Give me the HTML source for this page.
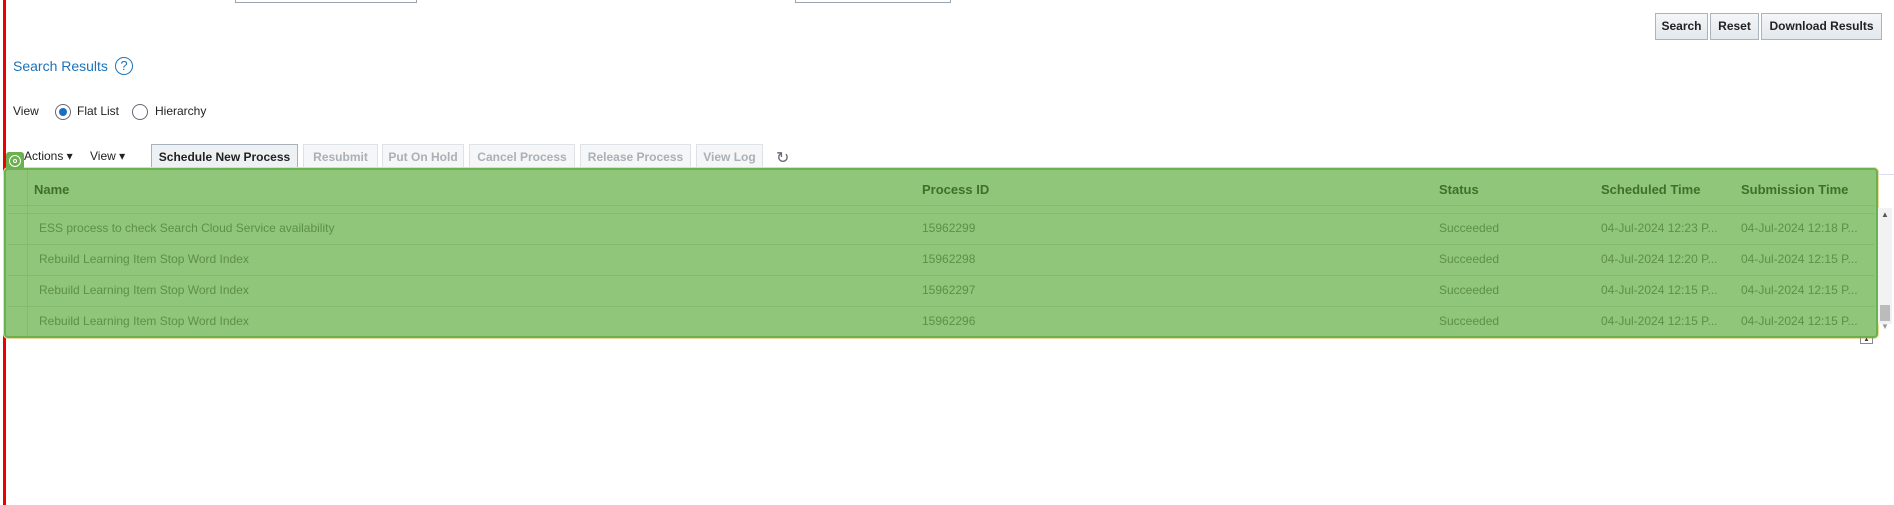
<!DOCTYPE html>
<html><head><meta charset="utf-8"><style>
*{margin:0;padding:0;box-sizing:border-box}
body{width:1894px;height:505px;background:#fff;position:relative;overflow:hidden;font-family:"Liberation Sans",Arial,sans-serif;font-size:12px;color:#333}
.a{position:absolute;white-space:nowrap}
.btn{position:absolute;border:1px solid #aab4bf;background:linear-gradient(#f4f6f8,#e3e8ec);font-weight:bold;font-size:12px;color:#222;text-align:center}
.tb{position:absolute;top:144px;height:26px;line-height:24px;border:1px solid #dde2e6;background:#f5f6f7;color:#a9b0b6;font-weight:bold;font-size:12px;text-align:center}
.hd{position:absolute;top:182px;font-weight:bold;font-size:13px;color:#3f6f2b}
.c{position:absolute;font-size:12px;color:#5e8f48}
.ln{position:absolute;left:8px;width:1866px;height:1px;background:#82bb6c}
</style></head><body>
<div class="a" style="left:3px;top:0;width:3px;height:505px;background:#e00"></div>
<div class="a" style="left:235px;top:0;width:182px;height:3px;border:1px solid #98a4b0;border-top:none"></div>
<div class="a" style="left:795px;top:0;width:156px;height:3px;border:1px solid #98a4b0;border-top:none"></div>
<div class="btn" style="left:1655px;top:13px;width:53px;height:27px;line-height:25px">Search</div>
<div class="btn" style="left:1710px;top:13px;width:49px;height:27px;line-height:25px">Reset</div>
<div class="btn" style="left:1761px;top:13px;width:121px;height:27px;line-height:25px">Download Results</div>
<div class="a" style="left:13px;top:58px;font-size:14px;color:#1d73b8">Search Results</div>
<div class="a" style="left:115px;top:57px;width:18px;height:18px;border:1.5px solid #1d73b8;border-radius:50%;color:#1d73b8;font-size:13px;line-height:15px;text-align:center">?</div>
<div class="a" style="left:13px;top:104px;font-size:12px;color:#222">View</div>
<div class="a" style="left:55px;top:104px;width:16px;height:16px;border:1px solid #667;border-radius:50%"></div>
<div class="a" style="left:59px;top:108px;width:8px;height:8px;background:#1a6fc0;border-radius:50%"></div>
<div class="a" style="left:77px;top:104px;color:#222">Flat List</div>
<div class="a" style="left:132px;top:104px;width:16px;height:16px;border:1px solid #667;border-radius:50%"></div>
<div class="a" style="left:155px;top:104px;color:#222">Hierarchy</div>
<div class="a" style="left:24px;top:149px;color:#222">Actions ▾</div>
<div class="a" style="left:90px;top:149px;color:#222">View ▾</div>
<div class="tb" style="left:151px;width:147px;color:#222;background:#eef1f4;border-color:#a8b2bc">Schedule New Process</div>
<div class="tb" style="left:303px;width:75px">Resubmit</div>
<div class="tb" style="left:382px;width:82px">Put On Hold</div>
<div class="tb" style="left:469px;width:106px">Cancel Process</div>
<div class="tb" style="left:580px;width:111px">Release Process</div>
<div class="tb" style="left:696px;width:67px">View Log</div>
<div class="a" style="left:776px;top:148px;font-size:16px;color:#667">↻</div>
<div class="a" style="left:4px;top:168px;width:1874px;height:170px;background:#8fc67a;border:2px solid #6bb14f;border-radius:4px;box-shadow:0 0 0 1px #f0d9a0"></div>
<div class="a" style="left:6px;top:152px;width:18px;height:18px;background:#6bb14f;border-radius:3px"></div>
<div class="a" style="left:9px;top:155px;width:12px;height:12px;border:1.5px solid #fff;border-radius:50%"></div>
<div class="a" style="left:13px;top:159px;width:4px;height:4px;border:1px solid #fff;border-radius:50%"></div>
<div class="a" style="left:27px;top:170px;width:1px;height:166px;background:#82bb6c"></div>
<div class="ln" style="top:205px"></div><div class="ln" style="top:213px"></div>
<div class="ln" style="top:244px"></div><div class="ln" style="top:275px"></div><div class="ln" style="top:306px"></div>
<div class="hd" style="left:34px">Name</div>
<div class="hd" style="left:922px">Process ID</div>
<div class="hd" style="left:1439px">Status</div>
<div class="hd" style="left:1601px">Scheduled Time</div>
<div class="hd" style="left:1741px">Submission Time</div>
<div class="c" style="left:39px;top:221px">ESS process to check Search Cloud Service availability</div>
<div class="c" style="left:39px;top:252px">Rebuild Learning Item Stop Word Index</div>
<div class="c" style="left:39px;top:283px">Rebuild Learning Item Stop Word Index</div>
<div class="c" style="left:39px;top:314px">Rebuild Learning Item Stop Word Index</div>
<div class="c" style="left:922px;top:221px">15962299</div>
<div class="c" style="left:922px;top:252px">15962298</div>
<div class="c" style="left:922px;top:283px">15962297</div>
<div class="c" style="left:922px;top:314px">15962296</div>
<div class="c" style="left:1439px;top:221px">Succeeded</div>
<div class="c" style="left:1439px;top:252px">Succeeded</div>
<div class="c" style="left:1439px;top:283px">Succeeded</div>
<div class="c" style="left:1439px;top:314px">Succeeded</div>
<div class="c" style="left:1601px;top:221px">04-Jul-2024 12:23 P...</div>
<div class="c" style="left:1601px;top:252px">04-Jul-2024 12:20 P...</div>
<div class="c" style="left:1601px;top:283px">04-Jul-2024 12:15 P...</div>
<div class="c" style="left:1601px;top:314px">04-Jul-2024 12:15 P...</div>
<div class="c" style="left:1741px;top:221px">04-Jul-2024 12:18 P...</div>
<div class="c" style="left:1741px;top:252px">04-Jul-2024 12:15 P...</div>
<div class="c" style="left:1741px;top:283px">04-Jul-2024 12:15 P...</div>
<div class="c" style="left:1741px;top:314px">04-Jul-2024 12:15 P...</div>
<div class="a" style="left:1878px;top:174px;width:16px;height:1px;background:#dde"></div>
<div class="a" style="left:1878px;top:208px;width:14px;height:116px;background:#f2f2f2"></div>
<div class="a" style="left:1881px;top:210px;font-size:8px;color:#555">▲</div>
<div class="a" style="left:1880px;top:305px;width:10px;height:16px;background:#bbb"></div>
<div class="a" style="left:1881px;top:322px;font-size:8px;color:#999">▼</div>
<div class="a" style="left:1860px;top:337px;width:13px;height:7px;border:1px solid #889;border-top:none;font-size:6px;text-align:center;line-height:6px">▲</div>
</body></html>
